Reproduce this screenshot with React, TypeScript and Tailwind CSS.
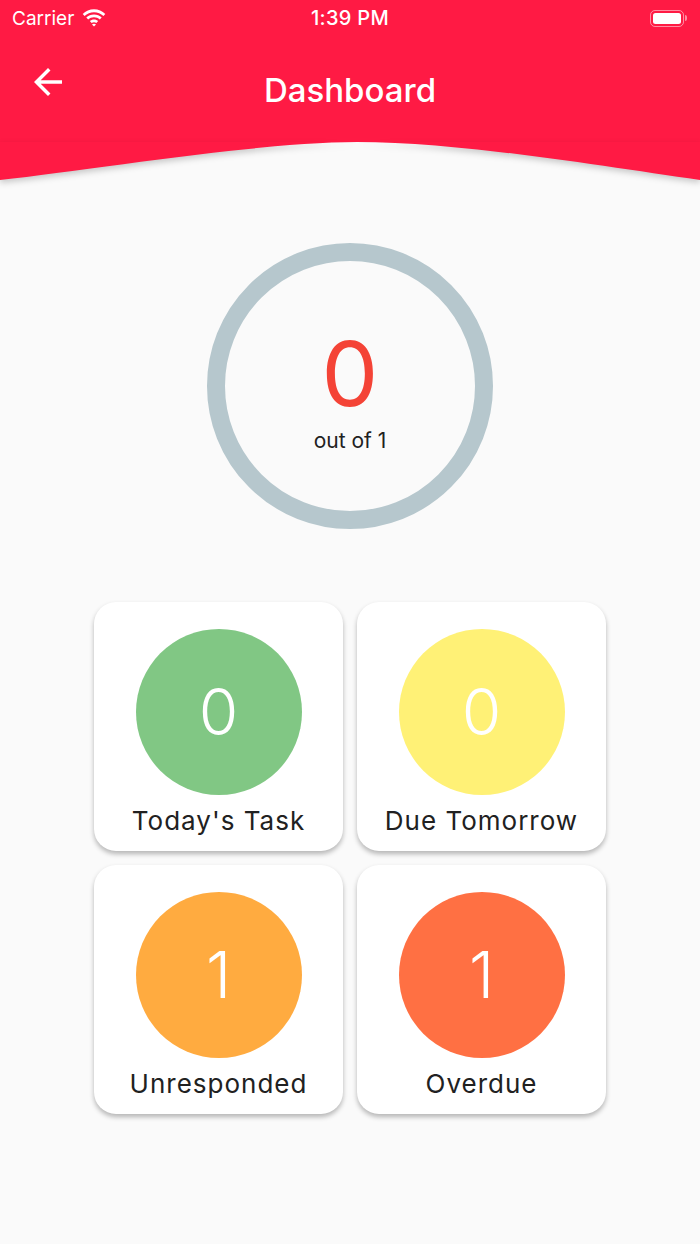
const tiles = [
  { label: "Today's Task", count: 0, color: 'bg-[#81c784]' },
  { label: 'Due Tomorrow', count: 0, color: 'bg-[#fff176]' },
  { label: 'Unresponded', count: 1, color: 'bg-[#ffab40]' },
  { label: 'Overdue', count: 1, color: 'bg-[#ff7043]' },
]

function StatusBar() {
  return (
    <div className="flex h-9 items-center justify-between px-3 text-white">
      <div className="flex w-[120px] items-center gap-[8px]">
        <span className="text-[19px] leading-none">Carrier</span>
        <svg width="24" height="18" viewBox="0 0 24 18" fill="white">
          <path d="M12 3.2c3.6 0 6.9 1.4 9.4 3.7l1.9-2C20.3 2 16.3.3 12 .3S3.7 2 .7 4.9l1.9 2C5.1 4.6 8.4 3.2 12 3.2z" />
          <path d="M12 8.3c2.2 0 4.2.8 5.8 2.2l1.9-2C17.7 6.6 15 5.4 12 5.4S6.3 6.6 4.3 8.5l1.9 2C7.8 9.1 9.8 8.3 12 8.3z" />
          <path d="M12 13.3c.9 0 1.7.3 2.3.8l1.9-2c-1.1-1-2.6-1.6-4.2-1.6s-3.1.6-4.2 1.6l1.9 2c.6-.5 1.4-.8 2.3-.8z" />
          <path d="M12 17.6l2-2.1c-.5-.4-1.2-.7-2-.7s-1.5.3-2 .7z" />
        </svg>
      </div>
      <span className="text-[20px] font-medium leading-none tracking-[0.3px]">1:39 PM</span>
      <div className="flex w-[120px] items-center justify-end gap-[1px] pr-[1px]">
        <div className="flex h-[17px] w-[34px] items-center rounded-[5px] border-[1.5px] border-white/50 p-[2px]">
          <div className="h-full w-full rounded-[2.5px] bg-white" />
        </div>
        <div className="h-[6px] w-[2px] rounded-r-sm bg-white/50" />
      </div>
    </div>
  )
}

function Header() {
  return (
    <div className="relative">
      <div className="bg-[#ff1a44]">
        <StatusBar />
        <div className="relative flex h-[106px] items-start justify-center pt-[33px]">
          {/* material arrow_back */}
          <svg className="absolute left-[27px] top-[25px]" width="42" height="42" viewBox="0 0 24 24" fill="white">
            <path d="M20 11H7.83l5.59-5.59L12 4l-8 8 8 8 1.41-1.41L7.83 13H20v-2z" />
          </svg>
          <h1 className="text-[33px] font-medium text-white leading-[42px]">Dashboard</h1>
        </div>
      </div>
      <svg
        className="block drop-shadow-[0_3px_3px_rgba(0,0,0,0.2)]"
        width="700"
        height="38"
        viewBox="0 0 700 38"
        preserveAspectRatio="none"
      >
        <path d="M0 0 H700 V38 C600 24 460 0 357 0 C260 0 90 28 0 38 Z" fill="#ff1a44" />
      </svg>
    </div>
  )
}

function Gauge() {
  return (
    <div className="flex justify-center pt-[63px]">
      <div className="flex h-[286px] w-[286px] flex-col items-center rounded-full border-[18px] border-[#b6c7cd]">
        <span className="mt-[77px] text-[90px] leading-[72px] text-[#f44336]">0</span>
        <span className="mt-[19px] text-[21px] leading-[24px] text-[#212121]">out of 1</span>
      </div>
    </div>
  )
}

export default function App() {
  return (
    <div className="min-h-[1244px] w-[700px] overflow-hidden bg-[#fafafa] font-['Inter',sans-serif]">
      <Header />
      <Gauge />
      <div className="mt-[73px] grid grid-cols-[249px_249px] justify-center gap-[14px]">
        {tiles.map((t) => (
          <div
            key={t.label}
            className="flex h-[249px] flex-col items-center rounded-[22px] bg-white pt-[27px] shadow-[0_3px_5px_rgba(0,0,0,0.28)]"
          >
            <div className={`flex h-[166px] w-[166px] items-center justify-center rounded-full ${t.color}`}>
              <span className="text-[64px] font-light leading-none text-white">{t.count}</span>
            </div>
            <span className="mt-[10px] text-[26px] leading-[32px] tracking-[1px] text-[#212121]">{t.label}</span>
          </div>
        ))}
      </div>
    </div>
  )
}
